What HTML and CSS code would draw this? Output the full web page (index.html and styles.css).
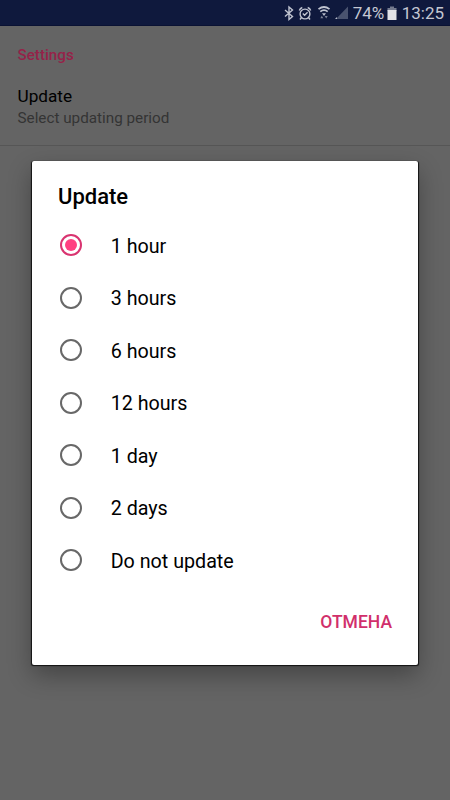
FILE: index.html
```html
<!DOCTYPE html>
<html lang="en">
<head>
<meta charset="utf-8">
<title>Settings</title>
<link rel="stylesheet" href="styles.css">
</head>
<body>
<header class="status">
  <svg class="icons" width="70" height="26" viewBox="0 0 70 26" fill="none" stroke="#c0c4d0">
    <path d="M5 10 12.500 16.500 9 19.500V7L12.500 10 5 16.500" stroke-width="1.400"/>
    <circle cx="25" cy="14" r="4.900" stroke-width="1.400"/>
    <path d="M19.300 10.500a5 5 0 0 1 3-3M30.700 10.500a5 5 0 0 0-3-3M21.500 17.500 20 19.500M28.500 17.500 30 19.500M22.800 13.500l1.800 1.800 3-3" stroke-width="1.400"/>
    <path d="M38.500 9.200q5.500-4.400 11 0M40.300 11.700q3.700-3 7.400 0" stroke-width="1.700"/>
    <path d="M42 13.200h4L44 16z" fill="#b9bdcb" stroke="none"/>
    <path d="m40.300 18.300 1.500-2.500 1.500 2.500zM44.700 16h3l-1.500 2.500z" fill="#7b8196" stroke="none"/>
    <path d="M68 6.500V19H56z" fill="#4a536f" stroke="none"/>
    <path d="M57 17v2h-2z" fill="#b9bdcb" stroke="none"/>
  </svg>
  <span class="percent">74%</span>
  <svg class="battery" width="10" height="26" viewBox="0 0 10 26">
    <path d="M3 6.500h4V8h2.500v3h-9V8H3z" fill="#747a8e"/>
    <path d="M.500 10h9v10h-9z" fill="#e1e2e7"/>
  </svg>
  <span class="clock">13:25</span>
</header>
<main class="page">
  <h1 class="category">Settings</h1>
  <section class="preference">
    <div class="pref-title">Update</div>
    <div class="pref-summary">Select updating period</div>
  </section>
</main>
<div class="overlay">
  <section class="dialog" role="dialog">
    <h2 class="dialog-title">Update</h2>
    <div class="options">
      <label class="option"><span class="radio checked"></span><span class="label">1 hour</span></label>
      <label class="option"><span class="radio"></span><span class="label">3 hours</span></label>
      <label class="option"><span class="radio"></span><span class="label">6 hours</span></label>
      <label class="option"><span class="radio"></span><span class="label">12 hours</span></label>
      <label class="option"><span class="radio"></span><span class="label">1 day</span></label>
      <label class="option"><span class="radio"></span><span class="label">2 days</span></label>
      <label class="option"><span class="radio"></span><span class="label">Do not update</span></label>
    </div>
    <div class="actions"><span class="cancel">ОТМЕНА</span></div>
  </section>
</div>
</body>
</html>
```
FILE: styles.css
```css
* { box-sizing: border-box; }
body {
  margin: 0;
  height: 800px;
  overflow: hidden;
  background: #646464;
  color: #000;
  font-family: Roboto, sans-serif;
}
.status {
  display: flex;
  justify-content: flex-end;
  height: 26px;
  padding-right: 6px;
  background: #0f193d;
  border-bottom: 1px solid #0a1233;
  color: #c4c7d2;
  font-size: 17px;
  line-height: 27px;
}
.icons { margin-right: 3px; }
.icons, .battery { flex: none; }
.percent { width: 34px; white-space: nowrap; }
.battery { margin-right: 5px; }
.page { height: 120px; border-bottom: 1px solid #565656; }
.category {
  margin: 0;
  padding: 19px 17.5px 0;
  color: #962249;
  font-size: 15.2px;
  font-weight: 500;
  line-height: 20px;
}
.preference { padding: 20px 17.5px 0; }
.pref-title { font-size: 17.2px; line-height: 22px; }
.pref-summary { color: #343434; font-size: 15.25px; line-height: 22px; }
.overlay {
  position: absolute;
  inset: 0;
  padding: 161px 32px 0;
}
.dialog {
  height: 504px;
  border-radius: 2px;
  background: #fff;
  box-shadow: 0 0.5px 1px 0.5px #111, 0 10px 24px rgba(0, 0, 0, .32);
}
.dialog-title {
  margin: 0;
  padding: 23px 26px 0;
  font-size: 22px;
  font-weight: 500;
  line-height: 26px;
}
.options { padding: 8.8px 28px 0; }
.option {
  display: flex;
  align-items: center;
  gap: 28.7px;
  height: 52.5px;
  font-size: 19.7px;
}
.label { padding-top: 2px; }
.radio {
  display: grid;
  place-items: center;
  width: 22px;
  height: 22px;
  border: 2px solid #686868;
  border-radius: 50%;
}
.checked { border-color: #d93470; }
.checked::after {
  content: "";
  width: 12px;
  height: 12px;
  border-radius: 50%;
  background: #ff4081;
}
.actions {
  display: flex;
  justify-content: flex-end;
  padding: 24.2px 26px 0;
}
.cancel {
  color: #d12f6b;
  font-size: 17.5px;
  font-weight: 500;
  line-height: 24px;
}
```
